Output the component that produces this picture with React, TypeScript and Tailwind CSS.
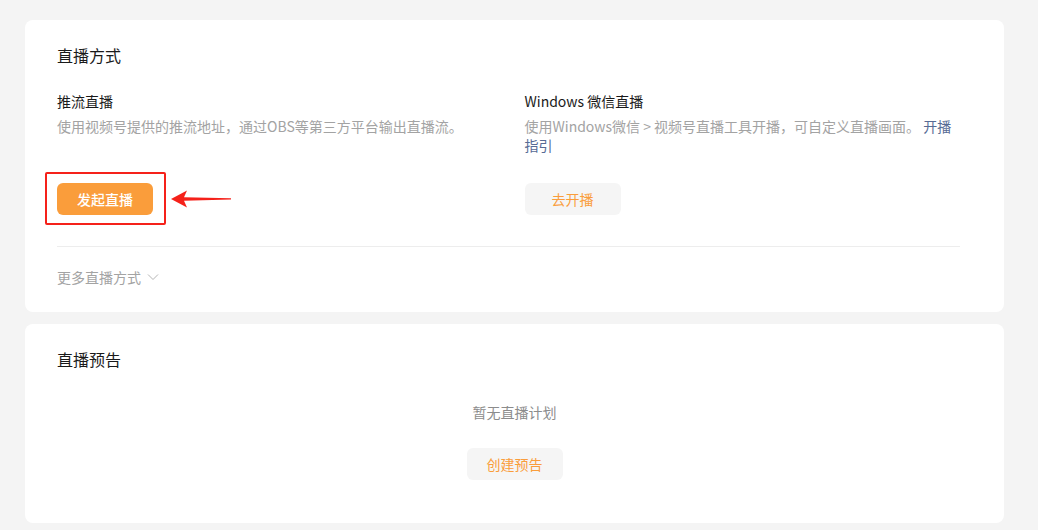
const FONT = { fontFamily: '"Noto Sans CJK SC", "Noto Sans", sans-serif' };

function GrayButton({ label }: { label: string }) {
  return (
    <button className="h-8 w-24 rounded-md bg-[#f5f5f5] text-sm text-[#fa9d3b]">{label}</button>
  );
}

export default function App() {
  return (
    <div style={FONT} className="min-h-[530px] bg-[#f4f4f4] pt-5 pl-[25px]">
      <div className="w-[979px] rounded-lg bg-white pl-8 pr-[44px] pt-[23px] pb-[25px]">
        <h2 className="text-base leading-6 text-[#1a1a1a]">直播方式</h2>

        <div className="mt-6 grid grid-cols-2 gap-8">
          <div>
            <p className="text-sm leading-5 text-[#1a1a1a]">推流直播</p>
            <p className="mt-1.5 min-h-[39px] text-sm leading-[19px] text-[#a3a3a3]">
              使用视频号提供的推流地址，通过OBS等第三方平台输出直播流。
            </p>
            <div className="relative mt-[27px] w-24">
              <button className="h-8 w-24 rounded-md bg-[#fa9d3b] text-sm font-medium text-white">发起直播</button>
              <div className="pointer-events-none absolute -top-[11px] -left-3 h-[53px] w-[121px] rounded-[2px] border-[2.5px] border-[#f5211a]" />
              <svg className="absolute top-[6px] left-[114px]" width="62" height="20" viewBox="0 0 62 20">
                <path d="M0 10 L16 1.5 L13 8.3 L60 9.2 L60 10.6 L13 11.8 L16 18.5 Z" fill="#f5211a" />
              </svg>
            </div>
          </div>

          <div>
            <p className="text-sm leading-5 text-[#1a1a1a]">Windows 微信直播</p>
            <p className="mt-1.5 min-h-[39px] text-sm leading-[19px] text-[#a3a3a3]">
              使用Windows微信 &gt; 视频号直播工具开播，可自定义直播画面。 <span className="text-[#576b95]">开播指引</span>
            </p>
            <div className="mt-[27px]">
              <GrayButton label="去开播" />
            </div>
          </div>
        </div>

        <div className="mt-[31px] h-px bg-[#ededed]" />

        <div className="mt-5 flex items-center gap-1.5 text-sm leading-5 text-[#a3a3a3]">
          <span>更多直播方式</span>
          <svg width="12" height="8" viewBox="0 0 12 8" fill="none">
            <path d="M1 1.5 L6 6.5 L11 1.5" stroke="#b5b5b5" strokeWidth="1" />
          </svg>
        </div>
      </div>

      <div className="mt-3 w-[979px] rounded-lg bg-white px-8 pt-[23px] pb-[43px]">
        <h2 className="text-base leading-6 text-[#1a1a1a]">直播预告</h2>
        <div className="mt-[31px] flex flex-col items-center">
          <p className="text-sm leading-5 text-[#8c8c8c]">暂无直播计划</p>
          <div className="mt-[26px]">
            <GrayButton label="创建预告" />
          </div>
        </div>
      </div>
    </div>
  );
}
